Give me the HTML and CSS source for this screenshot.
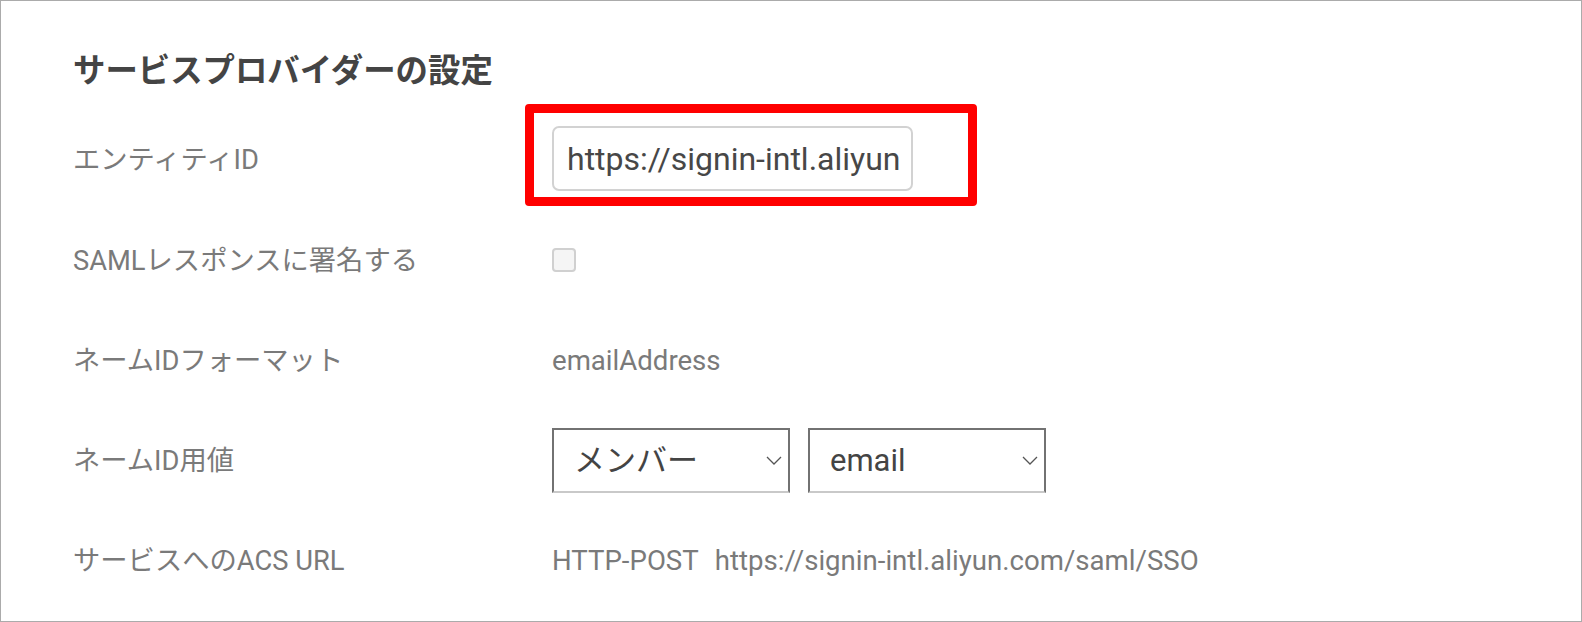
FILE: index.html
```html
<!DOCTYPE html>
<html lang="ja">
<head>
<meta charset="utf-8">
<title>サービスプロバイダーの設定</title>
<link rel="stylesheet" href="styles.css">
</head>
<body>
<div class="panel">
  <h2 class="title">サービスプロバイダーの設定</h2>
  <div class="form">
    <div class="label">エンティティID</div>
    <div class="value">
      <div class="input-wrap">
        <input class="text-input" type="text" value="https://signin-intl.aliyun" readonly>
        <div class="highlight"></div>
      </div>
    </div>

    <div class="label">SAMLレスポンスに署名する</div>
    <div class="value">
      <input class="checkbox" type="checkbox">
    </div>

    <div class="label">ネームIDフォーマット</div>
    <div class="value plain">emailAddress</div>

    <div class="label">ネームID用値</div>
    <div class="value selects">
      <div class="select-wrap">
        <select class="select"><option>メンバー</option></select>
        <svg class="chevron" width="16" height="9" viewBox="0 0 16 9"><path d="M1 1 L8 8 L15 1" fill="none" stroke="#555" stroke-width="1.3"/></svg>
      </div>
      <div class="select-wrap">
        <select class="select"><option>email</option></select>
        <svg class="chevron" width="16" height="9" viewBox="0 0 16 9"><path d="M1 1 L8 8 L15 1" fill="none" stroke="#555" stroke-width="1.3"/></svg>
      </div>
    </div>

    <div class="label">サービスへのACS URL</div>
    <div class="value plain"><span class="method">HTTP-POST</span>https://signin-intl.aliyun.com/saml/SSO</div>
  </div>
</div>
</body>
</html>
```
FILE: styles.css
```css
* { box-sizing: border-box; }
html, body { margin: 0; padding: 0; background: #fff; }
body {
  font-family: Roboto, "Noto Sans CJK JP", sans-serif;
}
.panel {
  width: 1582px;
  height: 622px;
  border: 1px solid #ababab;
  padding: 50px 0 0 72px;
  overflow: hidden;
}
.title {
  margin: 0 0 16px;
  font-size: 32.4px;
  line-height: 40px;
  font-weight: 700;
  color: #444;
}
.form {
  display: grid;
  grid-template-columns: 479px 1fr;
  grid-template-rows: 102px repeat(4, 100px);
  align-items: center;
}
.label {
  font-size: 27.3px;
  line-height: 36px;
  padding-top: 4px;
  color: #7a7a7a;
}
.value {
  display: flex;
  align-items: center;
}
.plain {
  font-size: 27.6px;
  line-height: 36px;
  padding-top: 4px;
  color: #7a7a7a;
}
.method { margin-right: 16px; }
.input-wrap {
  position: relative;
  width: 361px;
  height: 65px;
  margin-top: 1px;
}
.text-input {
  width: 361px;
  height: 65px;
  border: 2px solid #d2d2d2;
  border-radius: 7px;
  padding: 0 8px 0 13px;
  font-family: Roboto, "Noto Sans CJK JP", sans-serif;
  font-size: 32px;
  color: #474747;
  background: #fff;
  outline: none;
}
.highlight {
  position: absolute;
  left: -27px;
  top: -22px;
  width: 452px;
  height: 102px;
  border: 9px solid #ff0000;
  border-radius: 4px;
  pointer-events: none;
}
.checkbox {
  appearance: none;
  -webkit-appearance: none;
  width: 24px;
  height: 24px;
  margin: 1px 0 0;
  border: 2px solid #d0d0d0;
  border-radius: 4px;
  background: #f5f5f5;
}
.selects { gap: 18px; margin-top: 2px; }
.select-wrap {
  position: relative;
  width: 238px;
  height: 65px;
}
.select {
  appearance: none;
  -webkit-appearance: none;
  width: 238px;
  height: 65px;
  border: 2px solid #727272;
  border-bottom-color: #c9c9c9;
  border-radius: 0;
  background: #fff;
  padding: 0 40px 0 20px;
  font-family: Roboto, "Noto Sans CJK JP", sans-serif;
  font-size: 31px;
  color: #444;
  outline: none;
}
.chevron {
  position: absolute;
  right: 8px;
  top: 28px;
}
```
